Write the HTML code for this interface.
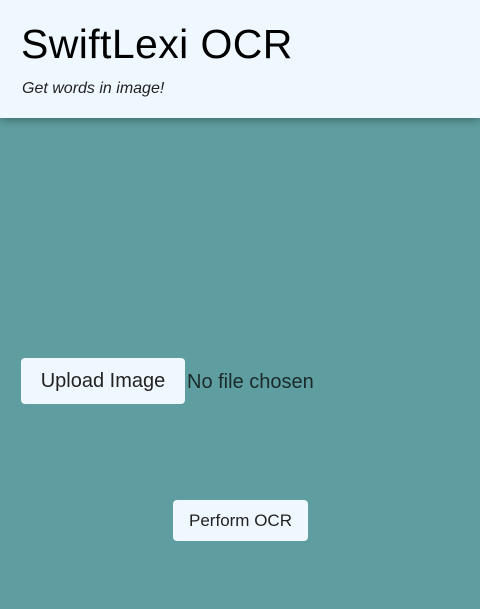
<!DOCTYPE html>
<html><head><meta charset="utf-8"><style>
html,body{margin:0;padding:0;width:480px;height:609px;overflow:hidden;background:#5f9ea0;font-family:"Liberation Sans",sans-serif;}
.hdr{position:absolute;left:0;top:0;width:480px;height:118px;background:#f0f8ff;box-shadow:0 2px 8px rgba(0,0,0,.35);}
h1{position:absolute;left:21px;top:21px;margin:0;font-size:41px;font-weight:normal;color:#000;letter-spacing:0.4px;}
.sub{position:absolute;left:22px;top:80px;font-size:16px;font-style:italic;color:#222;}
.up{position:absolute;left:21px;top:358px;width:164px;height:46px;background:#f0f8ff;border-radius:4px;font-size:20px;color:#222;line-height:46px;text-align:center;}
.nf{position:absolute;left:187px;top:371px;font-size:20px;color:#1a2a2a;}
.ocr{position:absolute;left:173px;top:500px;width:135px;height:41px;background:#f0f8ff;border-radius:4px;font-size:17px;color:#222;line-height:41px;text-align:center;}
</style></head><body>
<div class="hdr"><h1>SwiftLexi OCR</h1><div class="sub">Get words in image!</div></div>
<div class="up">Upload Image</div>
<div class="nf">No file chosen</div>
<div class="ocr">Perform OCR</div>
</body></html>
